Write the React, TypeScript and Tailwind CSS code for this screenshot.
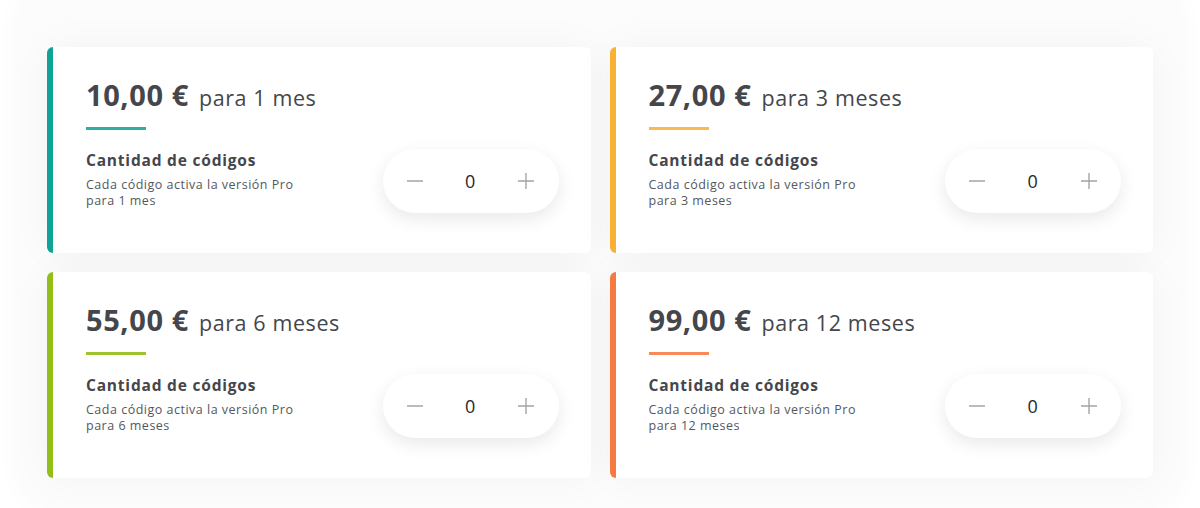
import { useState } from 'react';

interface Plan {
  price: string;
  period: string;
  bar: string;
  line: string;
}

const plans: Plan[] = [
  { price: '10,00 €', period: 'para 1 mes', bar: 'bg-[#0fa396]', line: 'bg-[#2bb0a3]' },
  { price: '27,00 €', period: 'para 3 meses', bar: 'bg-[#f8b133]', line: 'bg-[#f7bc4d]' },
  { price: '55,00 €', period: 'para 6 meses', bar: 'bg-[#92bf17]', line: 'bg-[#9dc42e]' },
  { price: '99,00 €', period: 'para 12 meses', bar: 'bg-[#f67a41]', line: 'bg-[#f7895a]' },
];

function Stepper() {
  const [count, setCount] = useState(0);
  return (
    <div className="flex h-[64px] w-[176px] items-center justify-between rounded-full bg-white px-[23px] shadow-[0_6px_18px_rgba(0,0,0,0.09)]">
      <button
        className="flex h-[18px] w-[18px] items-center justify-center text-[#a3a4a7]"
        onClick={() => setCount(Math.max(0, count - 1))}
      >
        <svg width="18" height="18" viewBox="0 0 18 18" fill="none" stroke="currentColor" strokeWidth="1.4">
          <path d="M1 9h16" />
        </svg>
      </button>
      <span className="text-[18px] font-normal tracking-[0.5px] text-[#26272b]">{count}</span>
      <button
        className="flex h-[18px] w-[18px] items-center justify-center text-[#a3a4a7]"
        onClick={() => setCount(count + 1)}
      >
        <svg width="18" height="18" viewBox="0 0 18 18" fill="none" stroke="currentColor" strokeWidth="1.4">
          <path d="M1 9h16M9 1v16" />
        </svg>
      </button>
    </div>
  );
}

function PlanCard({ plan }: { plan: Plan }) {
  return (
    <div className="flex h-[206px] overflow-hidden rounded-[6px] bg-white shadow-[0_0_40px_rgba(0,0,0,0.045)]">
      <div className={`w-[6px] shrink-0 ${plan.bar}`} />
      <div className="flex flex-1 flex-col pl-[33px] pr-[32px] pt-[28px]">
        <div className="flex items-baseline gap-[10px] text-[#45464b]">
          <span className="text-[29px] font-bold leading-[40px] tracking-[0.6px]">{plan.price}</span>
          <span className="text-[21.5px] font-normal leading-[40px] tracking-[0.6px]">{plan.period}</span>
        </div>
        <div className={`mt-[9px] h-[3px] w-[60px] ${plan.line}`} />
        <div className="mt-[19px] flex items-center justify-between">
          <div className="-mt-[5px]">
            <div className="text-[15.5px] font-bold leading-[22px] tracking-[0.8px] text-[#45464b]">
              Cantidad de códigos
            </div>
            <div className="mt-[6px] text-[12.5px] leading-[16px] tracking-[0.5px] text-[#55575c]">
              <div>Cada código activa la versión Pro</div>
              <div>{plan.period}</div>
            </div>
          </div>
          <Stepper />
        </div>
      </div>
    </div>
  );
}

export default function App() {
  return (
    <div className="min-h-[508px] bg-white px-[20px]" style={{ fontFamily: '"Open Sans", "Noto Sans", sans-serif' }}>
      <div className="rounded-b-[40px] bg-[#fcfcfd] px-[27px] pb-[30px] pt-[47px] shadow-[0_0_30px_rgba(0,0,0,0.03)]">
        <div className="grid grid-cols-2 gap-[19px]">
          {plans.map((p) => (
            <PlanCard key={p.price} plan={p} />
          ))}
        </div>
      </div>
    </div>
  );
}
